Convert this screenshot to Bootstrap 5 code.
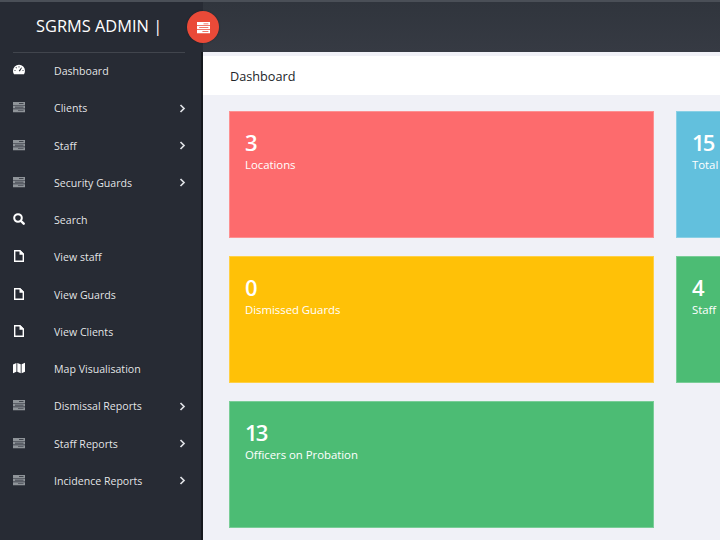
<!DOCTYPE html>
<html lang="en">
<head>
<meta charset="utf-8">
<title>SGRMS Admin</title>
<link rel="stylesheet" href="https://cdn.jsdelivr.net/npm/bootstrap@5.3.0/dist/css/bootstrap.min.css">
<style>
html,body{height:100%;overflow:hidden}
body{font-family:"Open Sans","Noto Sans",sans-serif;background:#f0f1f7;width:720px}
.shell{height:540px;width:720px;overflow:hidden}
.topbar{height:52px;flex:none;background:linear-gradient(#30353d,#363a43);border-top:2px solid #4a4f57}
.brand-cell{width:203px;flex:none;background:#272b34;position:relative;height:50px}
.brand-name{font-size:16.4px;color:#fff;line-height:48px;padding-left:36px;white-space:nowrap}
.brand-rule{position:absolute;left:13px;right:18px;bottom:-1px;height:1px;background:#41454d}
.toggle-btn{width:32px;height:32px;background:#ea4a38;border-radius:50%;margin-left:-16px;margin-top:9px;flex:none;position:relative;z-index:2;box-shadow:0 0 2px rgba(0,0,0,.3)}
.side{width:203px;flex:none;background:#272b34;border-right:2px solid #15181d;padding-top:1px}
.side-link{height:37.25px;padding:0 15px 0 13px;color:#e6e8ec;font-size:10.6px;text-shadow:0 0 1px rgba(0,0,0,.6)}
.side-link:hover{color:#fff}
.side-ico{width:12px;height:12px;flex:none;margin-right:29px;margin-top:-3px}
.ico-bars{color:#8f9499}
.ico-white{color:#fff}
.side-label{flex:1;white-space:nowrap;margin-top:1px}
.side-caret{width:7px;height:9px;flex:none;color:#dfe1e5;margin-top:-1px}
.main-pane{flex:1;min-width:0;padding-top:4px}
.title-strip{height:39px;background:#fff;padding-left:27px;font-size:12.7px;color:#212529;line-height:41px}
.tile-grid{display:grid;grid-template-columns:425px 425px;column-gap:22px;row-gap:18px;padding:16px 0 0 26px;width:900px}
.tile{height:127px;padding:16px 15px;color:#fff;border:1px solid rgba(255,255,255,.25);line-height:1}
.tile-num{font-size:22px;font-weight:600;line-height:28px;letter-spacing:-1.8px}
.tile-text{font-size:11.4px;line-height:18px;white-space:nowrap;letter-spacing:-.03px}
.t-red{background:#fd6b6d}
.t-blue{background:#62c0dd}
.t-amber{background:#ffc107}
.t-green{background:#4cbc74}
</style>
</head>
<body>
<svg width="0" height="0" class="position-absolute">
<defs>
<symbol id="i-bars" viewBox="0 0 12 12"><path fill="currentColor" fill-rule="evenodd" d="M0 1h12v3H0zM0 4.600h12v3H0zM0 8.200h12v3H0zM6 2.200v.7h4.500v-.7zM2 5.800v.7h8.500v-.7zM5 9.400v.7h5.500v-.7z"/></symbol>
<symbol id="i-gauge" viewBox="0 0 12 12"><path fill="currentColor" d="M6 .8a6 6 0 0 1 6 6c0 1.300-.3 2.500-1 3.500H1a6 6 0 0 1-1-3.500 6 6 0 0 1 6-6z"/><path fill="#272b34" d="M5.600 2.300h.8v1.200h-.8zM2.500 3.600l.6-.6.8.8-.6.6zM1.400 6.300h1.200v.8H1.400zM9.400 6.300h1.200v.8H9.400zM8.300 3.400l.7.4-2.100 3.600-1.200-.7z"/></symbol>
<symbol id="i-search" viewBox="0 0 12 12"><path fill="none" stroke="currentColor" stroke-width="2" d="M5 1.200a3.800 3.800 0 1 0 0 7.600 3.800 3.800 0 0 0 0-7.600z"/><path fill="none" stroke="currentColor" stroke-width="2.400" stroke-linecap="round" d="M8 8l2.700 2.700"/></symbol>
<symbol id="i-file" viewBox="0 0 12 12"><path fill="none" stroke="currentColor" stroke-width="1.400" d="M1.700.7h5.200l3.400 3.400v7.200H1.700z"/><path fill="currentColor" d="M6.500.5h1l3 3v1.200h-4z"/></symbol>
<symbol id="i-map" viewBox="0 0 12 12"><path fill="currentColor" d="M0 2.500 3.400 1v8.800L0 11.200zM4.300 1l3.400 1.300v8.900L4.300 9.800zM8.600 2.300 12 .8v8.900l-3.400 1.500z"/></symbol>
<symbol id="i-caret" viewBox="0 0 7 9"><path fill="none" stroke="currentColor" stroke-width="1.700" d="M1.500 1l3.500 3.500L1.500 8"/></symbol>
</defs>
</svg>
<div class="shell d-flex flex-column">
  <header class="topbar d-flex">
    <div class="brand-cell">
      <div class="brand-name">SGRMS ADMIN |</div>
      <div class="brand-rule"></div>
    </div>
    <div class="toggle-btn d-flex align-items-center justify-content-center">
      <svg width="15" height="13" class="text-white"><use href="#i-bars"/></svg>
    </div>
  </header>
  <div class="d-flex flex-grow-1">
    <nav class="side nav flex-column flex-nowrap">
      <a class="side-link nav-link d-flex align-items-center" href="#"><svg class="side-ico ico-white"><use href="#i-gauge"/></svg><span class="side-label">Dashboard</span></a>
      <a class="side-link nav-link d-flex align-items-center" href="#"><svg class="side-ico ico-bars"><use href="#i-bars"/></svg><span class="side-label">Clients</span><svg class="side-caret"><use href="#i-caret"/></svg></a>
      <a class="side-link nav-link d-flex align-items-center" href="#"><svg class="side-ico ico-bars"><use href="#i-bars"/></svg><span class="side-label">Staff</span><svg class="side-caret"><use href="#i-caret"/></svg></a>
      <a class="side-link nav-link d-flex align-items-center" href="#"><svg class="side-ico ico-bars"><use href="#i-bars"/></svg><span class="side-label">Security Guards</span><svg class="side-caret"><use href="#i-caret"/></svg></a>
      <a class="side-link nav-link d-flex align-items-center" href="#"><svg class="side-ico ico-white"><use href="#i-search"/></svg><span class="side-label">Search</span></a>
      <a class="side-link nav-link d-flex align-items-center" href="#"><svg class="side-ico ico-white"><use href="#i-file"/></svg><span class="side-label">View staff</span></a>
      <a class="side-link nav-link d-flex align-items-center" href="#"><svg class="side-ico ico-white"><use href="#i-file"/></svg><span class="side-label">View Guards</span></a>
      <a class="side-link nav-link d-flex align-items-center" href="#"><svg class="side-ico ico-white"><use href="#i-file"/></svg><span class="side-label">View Clients</span></a>
      <a class="side-link nav-link d-flex align-items-center" href="#"><svg class="side-ico ico-white"><use href="#i-map"/></svg><span class="side-label">Map Visualisation</span></a>
      <a class="side-link nav-link d-flex align-items-center" href="#"><svg class="side-ico ico-bars"><use href="#i-bars"/></svg><span class="side-label">Dismissal Reports</span><svg class="side-caret"><use href="#i-caret"/></svg></a>
      <a class="side-link nav-link d-flex align-items-center" href="#"><svg class="side-ico ico-bars"><use href="#i-bars"/></svg><span class="side-label">Staff Reports</span><svg class="side-caret"><use href="#i-caret"/></svg></a>
      <a class="side-link nav-link d-flex align-items-center" href="#"><svg class="side-ico ico-bars"><use href="#i-bars"/></svg><span class="side-label">Incidence Reports</span><svg class="side-caret"><use href="#i-caret"/></svg></a>
    </nav>
    <main class="main-pane">
      <div class="title-strip">Dashboard</div>
      <div class="tile-grid">
        <div class="tile t-red"><div class="tile-num">3</div><div class="tile-text">Locations</div></div>
        <div class="tile t-blue"><div class="tile-num">15</div><div class="tile-text">Total</div></div>
        <div class="tile t-amber"><div class="tile-num">0</div><div class="tile-text">Dismissed Guards</div></div>
        <div class="tile t-green"><div class="tile-num">4</div><div class="tile-text">Staff</div></div>
        <div class="tile t-green"><div class="tile-num">13</div><div class="tile-text">Officers on Probation</div></div>
      </div>
    </main>
  </div>
</div>
<script src="https://cdn.jsdelivr.net/npm/bootstrap@5.3.0/dist/js/bootstrap.bundle.min.js"></script>
</body>
</html>
